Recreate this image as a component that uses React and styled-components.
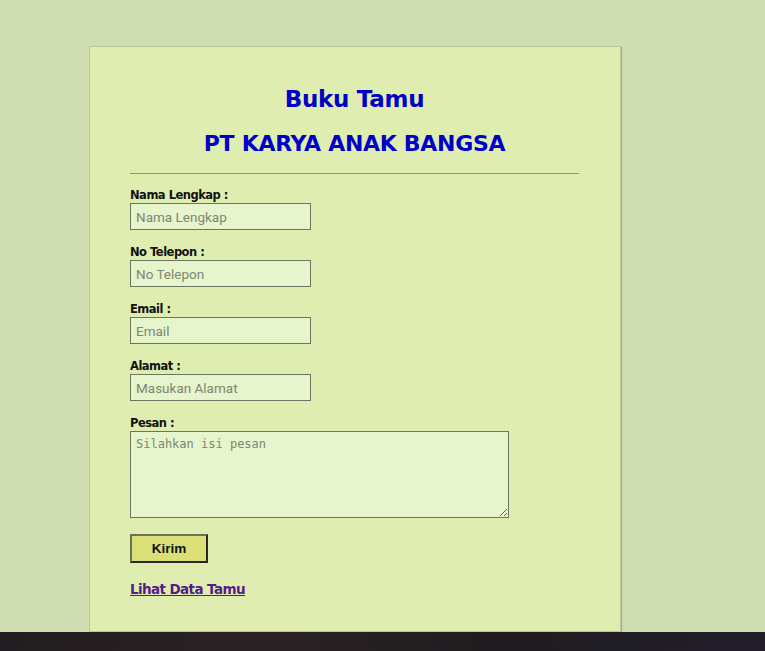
import React from 'react'
import styled, { createGlobalStyle } from 'styled-components'

const GlobalStyle = createGlobalStyle`
  html, body {
    margin: 0;
    padding: 0;
    background: #cfddb1;
  }
`

const Page = styled.div`
  display: flex;
  flex-direction: column;
  height: 651px;
  overflow: hidden;
`

const Stage = styled.div`
  flex: 1;
  padding: 46px 0 0 89px;
  background: #cfddb1;
`

const Taskbar = styled.div`
  height: 19px;
  background: linear-gradient(90deg, #221d20 0%, #2b2224 35%, #1e1c1f 65%, #221e2b 100%);
`

const Card = styled.div`
  box-sizing: border-box;
  width: 532px;
  height: 586px;
  padding: 38px 41px 0 40px;
  background: #dfeeb0;
  border: 1px solid #b9c6a0;
  box-shadow: 1px 1px 1px rgba(120, 135, 95, 0.5);
`

const Title = styled.h1`
  margin: 0;
  text-align: center;
  color: #0000c8;
  font-family: 'DejaVu Sans', Verdana, sans-serif;
  font-weight: bold;
  font-size: ${props => props.size}px;
  line-height: ${props => props.lh}px;
  letter-spacing: -0.3px;
`

const Rule = styled.hr`
  margin: 15px 0 13px;
  border: 0;
  border-top: 1px solid #8c9780;
`

const Form = styled.form`
  display: flex;
  flex-direction: column;
  align-items: flex-start;
`

const Field = styled.div`
  display: flex;
  flex-direction: column;
  margin-bottom: 14px;
`

const Label = styled.label`
  font-family: 'DejaVu Sans', Verdana, sans-serif;
  font-weight: bold;
  font-size: 11.5px;
  line-height: 16px;
  color: #111;
  letter-spacing: -0.5px;
`

const Input = styled.input`
  box-sizing: border-box;
  width: 181px;
  height: 27px;
  margin: 0;
  padding: 0 5px;
  background: #e7f5cc;
  border: 1px solid #6c7560;
  font-family: Roboto, 'Liberation Sans', sans-serif;
  font-size: 13.5px;
  color: #333;
  outline: none;

  &::placeholder {
    color: #7d8672;
  }
`

const TextArea = styled.textarea`
  box-sizing: border-box;
  width: 379px;
  height: 87px;
  margin: 0;
  padding: 5px;
  background: #e7f5cc;
  border: 1px solid #6c7560;
  font-family: 'DejaVu Sans Mono', 'Liberation Mono', monospace;
  font-size: 12px;
  outline: none;

  &::placeholder {
    color: #7d8672;
  }
`

const Button = styled.button`
  box-sizing: border-box;
  width: 78px;
  height: 29px;
  margin: 2px 0 0;
  background: #dbe076;
  border: 2px solid;
  border-color: #69715a #262922 #262922 #69715a;
  font-family: 'Liberation Sans', Arial, sans-serif;
  font-size: 13.5px;
  font-weight: bold;
  color: #111;
  cursor: pointer;
`

const DataLink = styled.a`
  margin-top: 18px;
  font-family: 'DejaVu Sans', Verdana, sans-serif;
  font-weight: bold;
  font-size: 13.5px;
  letter-spacing: -0.6px;
  color: #551a8b;
  text-decoration: underline;
`

const fields = [
  { label: 'Nama Lengkap :', placeholder: 'Nama Lengkap' },
  { label: 'No Telepon :', placeholder: 'No Telepon' },
  { label: 'Email :', placeholder: 'Email' },
  { label: 'Alamat :', placeholder: 'Masukan Alamat' },
]

const App = () => (
  <>
    <GlobalStyle />
    <Page>
      <Stage>
        <Card>
          <Title size={23} lh={28}>Buku Tamu</Title>
          <Title size={22} lh={28} style={{ marginTop: 17 }}>PT KARYA ANAK BANGSA</Title>
          <Rule />
          <Form onSubmit={e => e.preventDefault()}>
            {fields.map(f => (
              <Field key={f.label}>
                <Label>{f.label}</Label>
                <Input type="text" placeholder={f.placeholder} />
              </Field>
            ))}
            <Field>
              <Label>Pesan :</Label>
              <TextArea placeholder="Silahkan isi pesan" />
            </Field>
            <Button type="submit">Kirim</Button>
            <DataLink href="#">Lihat Data Tamu</DataLink>
          </Form>
        </Card>
      </Stage>
      <Taskbar />
    </Page>
  </>
)

export default App
